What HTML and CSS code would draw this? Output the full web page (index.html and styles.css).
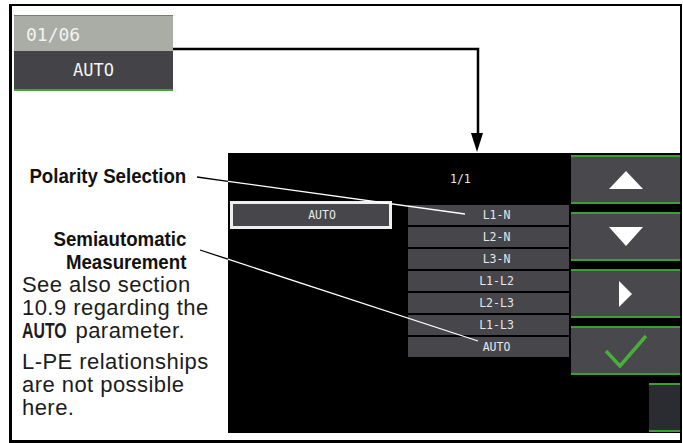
FILE: index.html
```html
<!DOCTYPE html>
<html lang="en">

<head>
    <meta charset="UTF-8">
    <meta name="viewport" content="width=device-width, initial-scale=1.0">
    <title>Polarity Selection</title>
    <link rel="stylesheet" href="styles.css">
</head>

<body>

    <div class="frame">
        <div class="param">
            <div class="param-head">01/06</div>
            <div class="param-value">AUTO</div>
        </div>

        <div class="figure">
            <div class="notes">
                <p class="label first"><span>Polarity Selection</span></p>
                <p class="label second"><span>Semiautomatic</span><span>Measurement</span></p>
                <p class="body-text">See also section<br>10.9 regarding the<br><b>AUTO</b> parameter.</p>
                <p class="body-text gap">L-PE relationships<br>are not possible<br>here.</p>
            </div>

            <div class="screen">
                <div class="screen-main">
                    <div class="page-no">1/1</div>
                    <div class="select-row">
                        <div class="current">AUTO</div>
                        <div class="options">
                            <div class="option">L1-N</div>
                            <div class="option">L2-N</div>
                            <div class="option">L3-N</div>
                            <div class="option">L1-L2</div>
                            <div class="option">L2-L3</div>
                            <div class="option">L1-L3</div>
                            <div class="option">AUTO</div>
                        </div>
                    </div>
                </div>

                <div class="side">
                    <div class="key">
                        <svg width="34" height="18" viewBox="0 0 34 18"><path d="M17 0L34 18H0Z" fill="#fff"/></svg>
                    </div>
                    <div class="key">
                        <svg width="34" height="19" viewBox="0 0 34 19"><path d="M0 0H34L17 19Z" fill="#fff"/></svg>
                    </div>
                    <div class="key">
                        <svg width="13" height="26" viewBox="0 0 13 26"><path d="M0 0L13 13L0 26Z" fill="#fff"/></svg>
                    </div>
                    <div class="key">
                        <svg width="44" height="34" viewBox="0 0 44 34"><path d="M2 17L16 32L42 2" fill="none" stroke="#4aae3a" stroke-width="3.5"/></svg>
                    </div>
                    <div class="key key-off"></div>
                </div>
            </div>
        </div>
    </div>

    <!-- arrow and callout lines drawn over the figure -->
    <svg class="callouts" width="683" height="443" viewBox="0 0 683 443">
        <path d="M173 49H478V135" fill="none" stroke="#000" stroke-width="2.5"/>
        <path d="M471 133H483L477 152Z" fill="#000"/>
        <line x1="197" y1="177" x2="228" y2="181.3" stroke="#000" stroke-width="1.3"/>
        <line x1="228" y1="181.3" x2="465" y2="214" stroke="#fff" stroke-width="1.3"/>
        <line x1="200" y1="250" x2="228" y2="259.2" stroke="#000" stroke-width="1.3"/>
        <line x1="228" y1="259.2" x2="478" y2="341" stroke="#fff" stroke-width="1.3"/>
    </svg>

</body>

</html>
```

FILE: styles.css
```css
body {
    margin: 0;
    padding: 4px 0 0 9px;
    position: relative;
    font-family: "Liberation Sans", Arial, sans-serif;
    background-color: #fff;
}

.frame {
    box-sizing: border-box;
    width: 673px;
    height: 439px;
    border: 2px solid #000;
    border-left-width: 3px;
    border-bottom-width: 3px;
}

/* parameter tile, top left */

.param {
    width: 159px;
    margin: 9px 0 0 2px;
    font-family: "DejaVu Sans Mono", monospace;
}

.param-head {
    box-sizing: border-box;
    height: 36px;
    padding: 3px 0 0 12px;
    border-top: 1px solid #3fa535;
    background-color: #a9ada6;
    color: #f2f4f0;
    font-size: 18px;
    line-height: 32px;
}

.param-value {
    box-sizing: border-box;
    height: 40px;
    border-bottom: 2px solid #3fa535;
    background-color: #434348;
    color: #f4f4f4;
    font-size: 17px;
    line-height: 38px;
    text-align: center;
}

.figure {
    display: flex;
    margin-top: 62px;
    height: 280px;
}

/* text column */

.notes {
    box-sizing: border-box;
    width: 216px;
    padding: 11px 0 0 10px;
}

.notes p {
    margin: 0;
}

/* condensed bold headings: no narrow face installed, so squeeze the bold */
.label {
    display: flex;
    flex-direction: column;
    align-items: flex-end;
    padding-right: 42px;
    font-weight: bold;
    font-size: 21px;
    line-height: 23px;
    white-space: nowrap;
    color: #111;
}

.label span {
    transform: scaleX(0.89);
    transform-origin: right center;
}

.label.second {
    margin-top: 40px;
}

.body-text {
    font-size: 22px;
    line-height: 23px;
    letter-spacing: 0.45px;
    color: #1c1c1c;
}

.body-text b {
    display: inline-block;
    margin-right: -15px;
    letter-spacing: 0;
    transform: scaleX(0.72);
    transform-origin: left center;
}

.body-text.gap {
    margin-top: 8px;
}

/* instrument screen */

.screen {
    display: flex;
    width: 452px;
    background-color: #000;
}

.screen-main {
    flex: 1;
    padding: 19px 0 0 2px;
    font-family: "DejaVu Sans Mono", monospace;
    font-size: 11.5px;
    color: #e8e8e8;
}

.page-no {
    margin-left: 220px;
    height: 14px;
    line-height: 14px;
}

.select-row {
    display: flex;
    margin-top: 15px;
}

.current {
    box-sizing: border-box;
    width: 162px;
    height: 28px;
    padding-left: 22px;
    border: 3px solid #eeeeee;
    background-color: #46464b;
    line-height: 22px;
    text-align: center;
}

.options {
    display: flex;
    flex-direction: column;
    gap: 2px;
    width: 161px;
    margin: 4px 0 0 16px;
}

.option {
    height: 20px;
    padding-left: 16px;
    background-color: #46464b;
    line-height: 20px;
    text-align: center;
}

.side {
    display: flex;
    flex-direction: column;
    align-items: flex-end;
    gap: 8px;
    width: 109px;
    padding-top: 2px;
}

.key {
    box-sizing: border-box;
    display: flex;
    align-items: center;
    justify-content: center;
    width: 100%;
    height: 49px;
    border-top: 2px solid #3c9f33;
    border-bottom: 2px solid #3c9f33;
    background-color: #48484d;
}

.key-off {
    width: 31px;
    background-color: #2b2b32;
}

.callouts {
    position: absolute;
    top: 0;
    left: 0;
    pointer-events: none;
}
```
